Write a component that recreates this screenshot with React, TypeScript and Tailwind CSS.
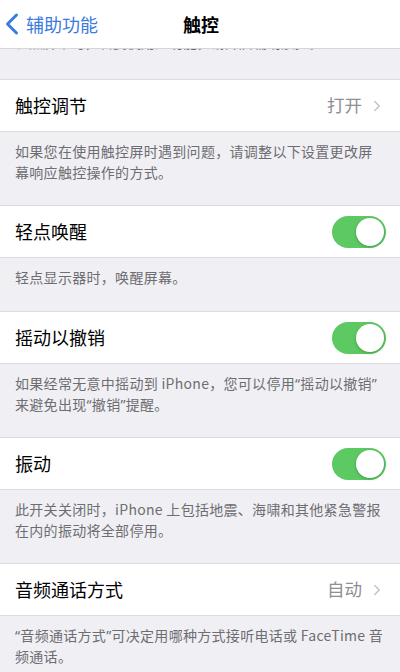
import { ChevronLeft, ChevronRight } from "lucide-react"

const font = { fontFamily: '"Noto Sans CJK SC", "Noto Sans", sans-serif' }

// ── Toggle ────────────────────────────────────────────────

function Toggle() {
  return (
    <div className="relative h-[32px] w-[54px] rounded-full bg-[#5cc962]">
      <div className="absolute right-[2px] top-[2px] h-[28px] w-[28px] rounded-full bg-white shadow-[0_1px_3px_rgba(0,0,0,0.25)]" />
    </div>
  )
}

// narrow latin quotes, as iOS draws them
function Q({ children }: { children: React.ReactNode }) {
  return <span className="font-['Noto_Sans',sans-serif]">{children}</span>
}

// ── Rows ──────────────────────────────────────────────────

function Row({ label, value, toggle }: { label: string; value?: string; toggle?: boolean }) {
  return (
    <div className="flex h-[53px] items-center justify-between border-y border-[#dcdce0] bg-white pl-[15px] pr-[14px]">
      <span className="text-[18px] text-black">{label}</span>
      {toggle ? (
        <Toggle />
      ) : (
        <div className="flex items-center gap-[6px]">
          <span className="text-[17.5px] text-[#8e8e93]">{value}</span>
          <ChevronRight className="h-[18px] w-[18px] text-[#c4c4c8]" strokeWidth={2} />
        </div>
      )}
    </div>
  )
}

function Footer({ lines }: { lines: React.ReactNode[] }) {
  return (
    <div
      className={`px-[15px] pt-[9px] text-[14px] leading-[21px] tracking-[0.3px] text-[#6d6d72] ${
        lines.length > 1 ? "pb-[22px]" : "pb-[23px]"
      }`}
    >
      {lines.map((line, i) => (
        <div key={i} className="whitespace-nowrap">
          {line}
        </div>
      ))}
    </div>
  )
}

export default function App() {
  return (
    <div style={font} className="h-[672px] w-[400px] overflow-hidden bg-[#f0f0f4]">
      <div className="relative z-10 flex h-[49px] items-center border-b border-[#d6d6da] bg-white">
        <div className="flex w-[130px] items-center text-[#3a7be0]">
          <ChevronLeft className="-ml-[6px] h-[36px] w-[36px] shrink-0" strokeWidth={2} />
          <span className="-ml-[4px] text-[18px]">辅助功能</span>
        </div>
        <span className="ml-[53px] text-[18px] font-semibold text-black">触控</span>
      </div>

      <div className="h-[30px] overflow-hidden">
        <div className="-mt-[17px] whitespace-nowrap px-[15px] text-[14px] leading-[21px] text-[#6d6d72]">
          轻点屏幕时，若要使用此功能，请开启辅助触控。
        </div>
      </div>

      <Row label="触控调节" value="打开" />
      <Footer lines={["如果您在使用触控屏时遇到问题，请调整以下设置更改屏", "幕响应触控操作的方式。"]} />

      <Row label="轻点唤醒" toggle />
      <Footer lines={["轻点显示器时，唤醒屏幕。"]} />

      <Row label="摇动以撤销" toggle />
      <Footer
        lines={[
          <>
            如果经常无意中摇动到 iPhone，您可以停用<Q>“</Q>摇动以撤销<Q>”</Q>
          </>,
          <>
            来避免出现<Q>“</Q>撤销<Q>”</Q>提醒。
          </>,
        ]}
      />

      <Row label="振动" toggle />
      <Footer lines={["此开关关闭时，iPhone 上包括地震、海啸和其他紧急警报", "在内的振动将全部停用。"]} />

      <Row label="音频通话方式" value="自动" />
      <Footer
        lines={[
          <>
            <Q>“</Q>音频通话方式<Q>”</Q>可决定用哪种方式接听电话或 FaceTime 音
          </>,
          "频通话。",
        ]}
      />
    </div>
  )
}
